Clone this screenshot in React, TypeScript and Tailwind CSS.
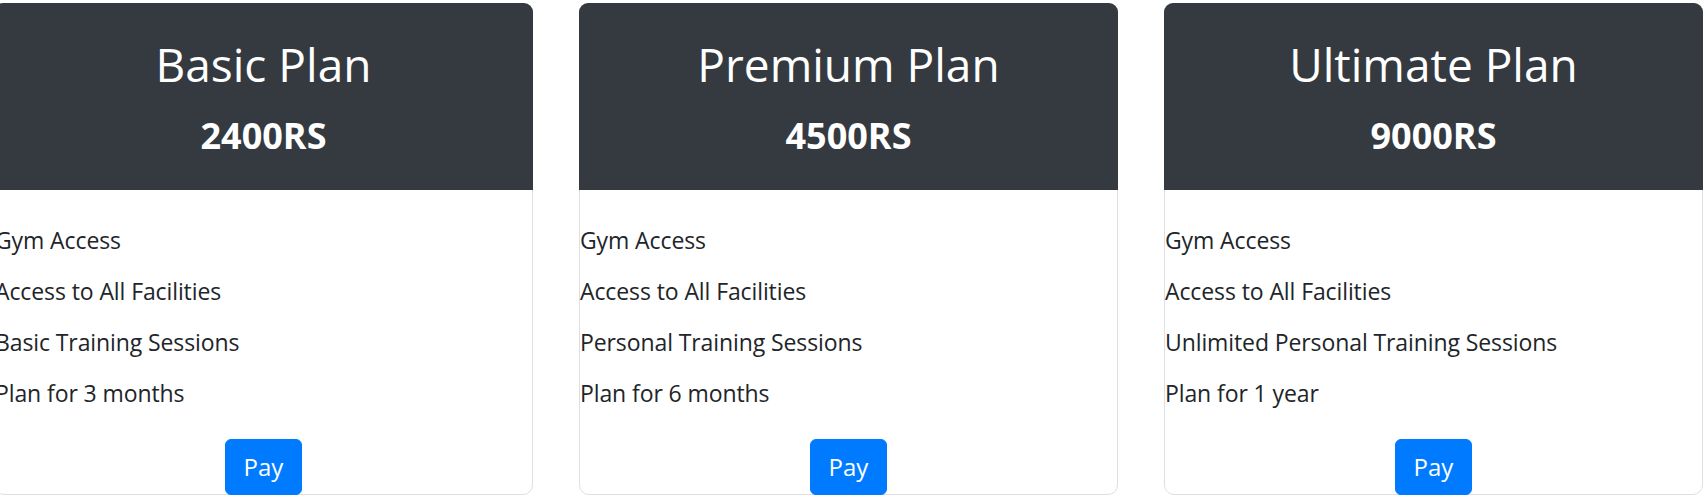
const plans = [
  {
    name: "Basic Plan",
    price: "2400RS",
    features: ["Gym Access", "Access to All Facilities", "Basic Training Sessions", "Plan for 3 months"],
  },
  {
    name: "Premium Plan",
    price: "4500RS",
    features: ["Gym Access", "Access to All Facilities", "Personal Training Sessions", "Plan for 6 months"],
  },
  {
    name: "Ultimate Plan",
    price: "9000RS",
    features: ["Gym Access", "Access to All Facilities", "Unlimited Personal Training Sessions", "Plan for 1 year"],
  },
];

type Plan = (typeof plans)[number];

const PlanCard = ({ plan }: { plan: Plan }) => {
  return (
    <div className="w-[539px] h-[492px] shrink-0 flex flex-col border border-[#dfdfdf] rounded-[10px] bg-white">
      {/* header */}
      <div className="bg-[#343a40] text-white text-center rounded-t-[9px] h-[187px] pt-[32px] -mx-px -mt-px">
        <h2 className="text-[46px] leading-[58px] font-medium">{plan.name}</h2>
        <h4 className="mt-[21px] text-[36px] leading-[43px] font-bold">{plan.price}</h4>
      </div>

      {/* features */}
      <ul className="pt-[32px] text-[23px] leading-[36px] tracking-[-0.1px] text-[#212529]">
        {plan.features.map((f) => (
          <li key={f} className="mb-[15px]">
            {f}
          </li>
        ))}
      </ul>

      <div className="mt-auto flex justify-center">
        <button className="bg-[#007bff] text-white text-[24px] leading-[36px] px-[18px] py-[9px] rounded-[6px] border border-[#007bff] -mb-px">
          Pay
        </button>
      </div>
    </div>
  );
};

export default function App() {
  return (
    <div
      className="bg-white w-[1708px] h-[503px] overflow-hidden pt-[3px]"
      style={{ fontFamily: '"Open Sans", "Noto Sans", sans-serif' }}
    >
      <div className="flex gap-[46px] ml-[-6px]">
        {plans.map((p) => (
          <PlanCard key={p.name} plan={p} />
        ))}
      </div>
    </div>
  );
}
